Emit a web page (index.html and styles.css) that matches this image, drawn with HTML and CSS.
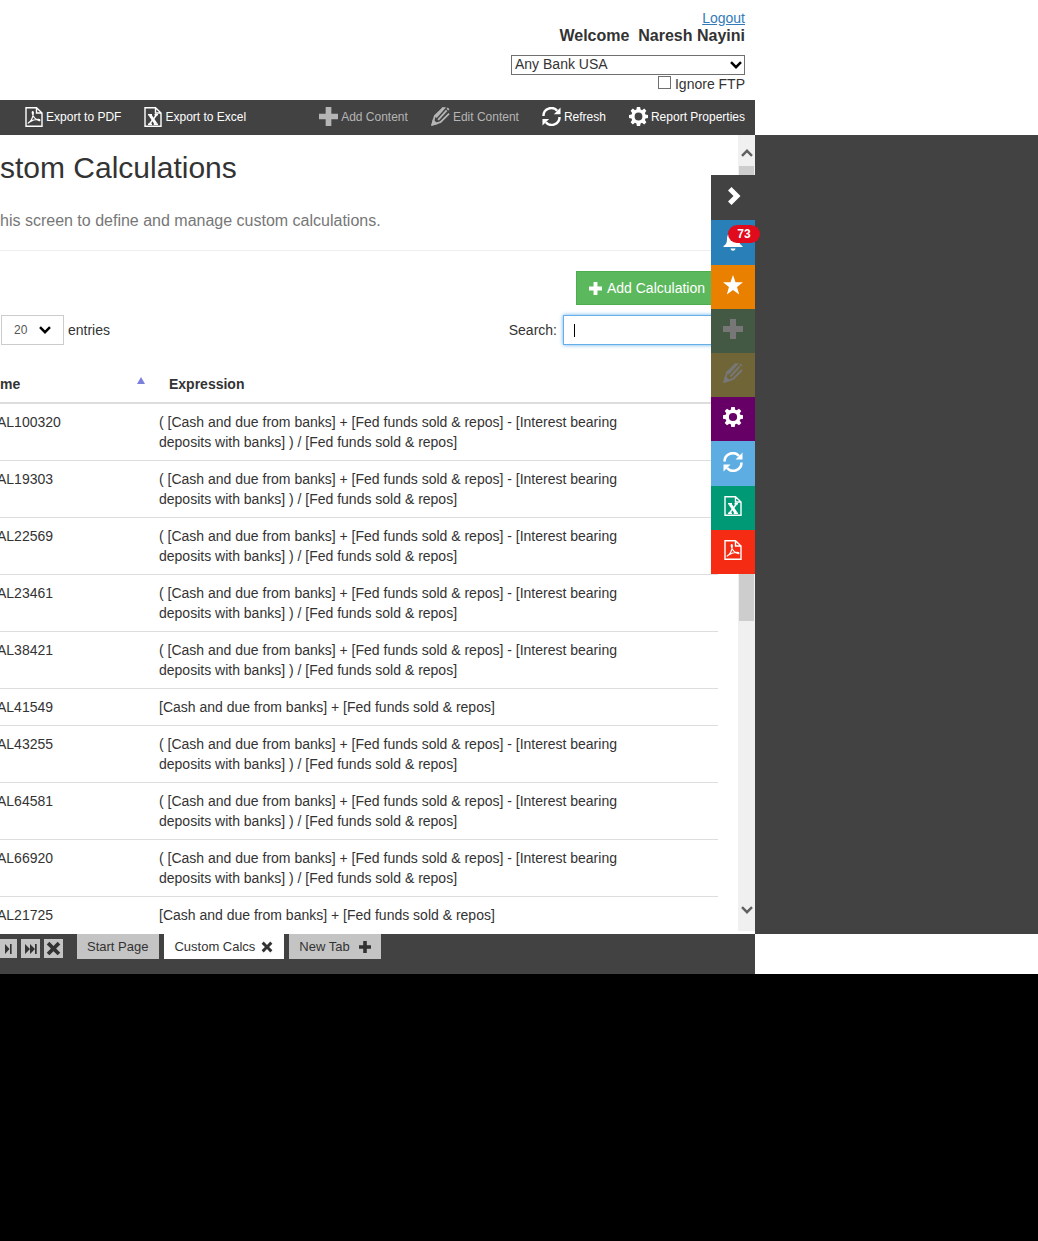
FILE: index.html
```html
<!DOCTYPE html>
<html lang="en">
<head>
<meta charset="utf-8">
<title>Custom Calculations</title>
<link rel="stylesheet" href="styles.css">
</head>
<body>
<svg class="sprite" aria-hidden="true">
  <symbol id="plus" viewBox="0 0 20 20"><path d="M7 0h6v7h7v6h-7v7H7v-7H0V7h7z"/></symbol>
  <symbol id="pencil" viewBox="0 0 20 20"><path fill="none" stroke="currentColor" stroke-width="1.900" stroke-linejoin="round" d="M13 1 4 9.500 1.500 18.500 10 16l9-9M7.500 13.500l9-10M17 1.200 18.800 3"/><path d="m0 20 2-7.500L7.500 18zM12 .300h4L6 11.500 4 10z"/></symbol>
  <symbol id="refresh" viewBox="0 0 20 20"><path fill="none" stroke="currentColor" stroke-width="2.600" d="M1.500 9.500A8.300 8.300 0 0 1 16 4M18.500 10.500A8.300 8.300 0 0 1 4 16"/><path d="M19.500.500V7.500h-7zM.500 19.500v-7h7z"/></symbol>
  <symbol id="gear" viewBox="0 0 20 20"><path fill-rule="evenodd" d="M8.300 0h3.400l.5 2.700 1.500.6L16 1.700 18.300 4l-1.600 2.300.6 1.500 2.700.5v3.400l-2.700.5-.6 1.500 1.600 2.300-2.300 2.300-2.300-1.600-1.500.6-.5 2.700H8.300l-.5-2.700-1.500-.6L4 18.300 1.700 16l1.600-2.300-.6-1.500L0 11.700V8.300l2.700-.5.6-1.500L1.700 4 4 1.700l2.300 1.600 1.500-.6zM10 5.900a4.100 4.100 0 1 0 0 8.200 4.100 4.100 0 0 0 0-8.200z"/></symbol>
  <symbol id="pdf" viewBox="0 0 18 20"><path fill="none" stroke="currentColor" stroke-width="1.400" d="M1 .8h10.500L17 6v13.200H1zM11.500.8V6H17"/><path fill="none" stroke="currentColor" stroke-width="1.300" d="M3.300 16c2.500-1 5-5.500 5-10.500 0-1.200-1.300-1-1 .5.700 4 3 6.500 7 7.500.8.200.7-1-.3-1-3.500-.2-6.500.6-9.500 2.500-1 .7-1.500 1.300-1.200 1z"/></symbol>
  <symbol id="excel" viewBox="0 0 18 20"><path fill="none" stroke="currentColor" stroke-width="1.400" d="M1 .8h10.500L17 6v13.200H1zM11.500.8V6H17"/><path fill="none" stroke="currentColor" stroke-width="3" d="m6 8 6 9"/><path fill="none" stroke="currentColor" stroke-width="1.500" d="m12.500 8-7 9M4 7.700h4M10.500 7.700H14M4 17.200h4M9.800 17.200H14"/></symbol>
  <symbol id="cross" viewBox="0 0 20 20"><path d="M4.500 1 10 6.500 15.500 1 19 4.500 13.500 10l5.500 5.500-3.500 3.500-5.500-5.500L4.500 19 1 15.500 6.500 10 1 4.500z"/></symbol>
  <symbol id="right" viewBox="0 0 20 20"><path d="m8.500 1 9 9-9 9L5 15.500l5.500-5.500L5 4.500z"/></symbol>
  <symbol id="bell" viewBox="0 0 20 20"><path d="M10 0c1 0 1.500.8 1.500 1.700C15 2.500 16 5 16 8c0 4 1 5.500 3.500 7v1H.500v-1C3 13.500 4 12 4 8c0-3 1-5.500 4.500-6.300C8.500.8 9 0 10 0zM7.500 17.500h5c-.5 3-4.500 3-5 0z"/></symbol>
  <symbol id="star" viewBox="0 0 20 20"><path d="m10 0 2.500 7.200H20l-6 4.700 2.200 7.600L10 15l-6.200 4.500L6 11.900 0 7.200h7.500z"/></symbol>
  <symbol id="chevron" viewBox="0 0 12 8"><path fill="none" stroke="currentColor" stroke-width="2.400" d="m1 1.200 5 5 5-5"/></symbol>
  <symbol id="next" viewBox="0 0 12 12"><path d="m3 1 4.500 5L3 11zM8 1h1.600v10H8z"/></symbol>
  <symbol id="last" viewBox="0 0 12 12"><path d="m0 1 5 5-5 5zM5 1l5 5-5 5zM10 1h1.700v10H10z"/></symbol>
</svg>
<div class="screen">
  <div class="app">
    <header class="account">
      <a class="logout" href="#">Logout</a>
      <strong class="welcome">Welcome&nbsp; Naresh Nayini</strong>
      <div class="select bank">
        <select aria-label="Bank"><option>Any Bank USA</option></select>
        <svg><use href="#chevron"/></svg>
      </div>
      <label class="ftp"><input type="checkbox">Ignore FTP</label>
    </header>

    <nav class="toolbar" aria-label="Report actions">
      <div class="group">
        <button><svg class="doc"><use href="#pdf"/></svg>Export to PDF</button>
        <button><svg class="doc"><use href="#excel"/></svg>Export to Excel</button>
      </div>
      <div class="group">
        <button disabled><svg><use href="#plus"/></svg>Add Content</button>
        <button disabled><svg><use href="#pencil"/></svg>Edit Content</button>
        <button><svg><use href="#refresh"/></svg>Refresh</button>
        <button><svg><use href="#gear"/></svg>Report Properties</button>
      </div>
    </nav>

    <div class="view">
      <main class="page">
        <h1>stom Calculations</h1>
        <p class="lead">his screen to define and manage custom calculations.</p>
        <div class="actions"><button class="add"><svg><use href="#plus"/></svg>Add Calculation</button></div>
        <div class="filters">
          <label class="length">
            <span class="select"><select><option>20</option></select><svg><use href="#chevron"/></svg></span>
            entries</label>
          <label class="search">Search: <input type="text"></label>
        </div>
        <table>
          <colgroup><col class="name"><col><col class="tools"></colgroup>
          <thead><tr><th><span class="sorted">me</span></th><th>Expression</th><th></th></tr></thead>
          <tbody>
            <tr><td>AL100320</td><td>( [Cash and due from banks] + [Fed funds sold &amp; repos] - [Interest bearing deposits with banks] ) / [Fed funds sold &amp; repos]</td><td></td></tr>
            <tr><td>AL19303</td><td>( [Cash and due from banks] + [Fed funds sold &amp; repos] - [Interest bearing deposits with banks] ) / [Fed funds sold &amp; repos]</td><td></td></tr>
            <tr><td>AL22569</td><td>( [Cash and due from banks] + [Fed funds sold &amp; repos] - [Interest bearing deposits with banks] ) / [Fed funds sold &amp; repos]</td><td></td></tr>
            <tr><td>AL23461</td><td>( [Cash and due from banks] + [Fed funds sold &amp; repos] - [Interest bearing deposits with banks] ) / [Fed funds sold &amp; repos]</td><td></td></tr>
            <tr><td>AL38421</td><td>( [Cash and due from banks] + [Fed funds sold &amp; repos] - [Interest bearing deposits with banks] ) / [Fed funds sold &amp; repos]</td><td></td></tr>
            <tr><td>AL41549</td><td>[Cash and due from banks] + [Fed funds sold &amp; repos]</td><td></td></tr>
            <tr><td>AL43255</td><td>( [Cash and due from banks] + [Fed funds sold &amp; repos] - [Interest bearing deposits with banks] ) / [Fed funds sold &amp; repos]</td><td></td></tr>
            <tr><td>AL64581</td><td>( [Cash and due from banks] + [Fed funds sold &amp; repos] - [Interest bearing deposits with banks] ) / [Fed funds sold &amp; repos]</td><td></td></tr>
            <tr><td>AL66920</td><td>( [Cash and due from banks] + [Fed funds sold &amp; repos] - [Interest bearing deposits with banks] ) / [Fed funds sold &amp; repos]</td><td></td></tr>
            <tr><td>AL21725</td><td>[Cash and due from banks] + [Fed funds sold &amp; repos]</td><td></td></tr>
          </tbody>
        </table>
      </main>
      <div class="scrollbar">
        <svg class="up"><use href="#chevron"/></svg>
        <div class="thumb"></div>
        <svg><use href="#chevron"/></svg>
      </div>
      <aside class="rail">
        <button class="expand" aria-label="Expand"><svg><use href="#right"/></svg></button>
        <button class="alerts" aria-label="Alerts"><svg><use href="#bell"/></svg><span class="badge">73</span></button>
        <button class="favorite" aria-label="Favorites"><svg><use href="#star"/></svg></button>
        <button class="insert" aria-label="Add content" disabled><svg><use href="#plus"/></svg></button>
        <button class="edit" aria-label="Edit content" disabled><svg><use href="#pencil"/></svg></button>
        <button class="settings" aria-label="Report properties"><svg><use href="#gear"/></svg></button>
        <button class="reload" aria-label="Refresh"><svg><use href="#refresh"/></svg></button>
        <button class="xls" aria-label="Export to Excel"><svg><use href="#excel"/></svg></button>
        <button class="acrobat" aria-label="Export to PDF"><svg><use href="#pdf"/></svg></button>
      </aside>
    </div>

    <footer class="tabbar">
      <div class="pager">
        <button aria-label="Next tab"><svg><use href="#next"/></svg></button>
        <button aria-label="Last tab"><svg><use href="#last"/></svg></button>
        <button aria-label="Close all tabs"><svg class="close"><use href="#cross"/></svg></button>
      </div>
      <div class="tabs">
        <button>Start Page</button>
        <button class="current">Custom Calcs<svg><use href="#cross"/></svg></button>
        <button class="new">New Tab<svg><use href="#plus"/></svg></button>
      </div>
    </footer>
  </div>
  <div class="backdrop"></div>
</div>
</body>
</html>
```
FILE: styles.css
```css
* { box-sizing: border-box; }
body {
  margin: 0;
  background: #000;
  color: #333;
  font: 14px/20px "Liberation Sans", Arial, sans-serif;
}
button, select, input { font: inherit; color: inherit; border-radius: 0; }
button { border: 0; padding: 0; background: none; }
svg { fill: currentColor; flex: none; }
.sprite { display: none; }

.screen {
  display: grid;
  grid-template-columns: minmax(0, 1fr) 283px;
  background: #fff;
}
.backdrop { background: #424242; margin: 135px 0 40px; }

/* account block */
.account {
  display: flex;
  flex-direction: column;
  align-items: flex-end;
  height: 100px;
  padding: 9px 10px 0 0;
}
.logout { color: #337ab7; line-height: 18px; }
.welcome { font-size: 16px; line-height: 18px; }
.select { display: inline-flex; align-items: center; position: relative; }
.select select { appearance: none; width: 100%; background: #fff; }
.select svg { position: absolute; right: 3px; width: 12px; height: 8px; color: #000; pointer-events: none; }
.bank { width: 234px; height: 20px; margin-top: 10px; }
.bank select { height: 20px; border: 1px solid #707070; padding: 0 3px 2px; line-height: 16px; }
.ftp { display: flex; align-items: center; gap: 4px; line-height: 18px; }
.ftp input {
  appearance: none;
  width: 13px;
  height: 13px;
  margin: 0 0 3px;
  border: 1px solid #707070;
}

/* toolbar */
.toolbar {
  display: flex;
  justify-content: flex-end;
  gap: 73px;
  height: 35px;
  padding: 0 10px 2px 0;
  background: #424242;
  color: #fff;
  font-size: 12px;
}
.group { display: flex; gap: 23px; }
.toolbar button { display: flex; align-items: center; gap: 3px; white-space: nowrap; }
.toolbar svg { width: 19px; height: 19px; }
.toolbar .doc { width: 18px; height: 20px; }
.toolbar button:disabled { color: #b5b5b5; }

/* scrolled page */
.view { position: relative; display: flex; }
.page { flex: 1; min-width: 0; padding: 16px 20px 1px 0; }
h1 { margin: 0; font-size: 30px; font-weight: 400; line-height: 34px; }
.lead {
  margin: 0;
  padding: 26px 0 19px;
  border-bottom: 1px solid #eee;
  color: #777;
  font-size: 16px;
}
.actions { display: flex; justify-content: flex-end; padding-top: 20px; }
.add {
  display: flex;
  align-items: center;
  gap: 5px;
  height: 34px;
  padding: 0 12px;
  border: 1px solid #4cae4c;
  background: #5cb85c;
  color: #fff;
}
.add svg { width: 13px; height: 13px; }
.filters { display: flex; justify-content: space-between; padding-top: 10px; }
.filters label { display: flex; align-items: center; height: 30px; gap: 4px; }
.length { padding-left: 1px; }
.length .select { width: 63px; }
.length select { height: 30px; border: 1px solid #ccc; padding: 0 12px; color: #555; font-size: 12px; }
.length svg { right: 13px; }
.search input {
  width: 155px;
  height: 30px;
  margin-left: 2px;
  padding: 0 10px;
  border: 1px solid #66afe9;
  outline: 0;
  background: linear-gradient(#000, #000) no-repeat 10px 8px / 1px 13px;
  box-shadow: 0 0 4px #66afe9;
}

table { width: 100%; margin-top: 19px; border-collapse: separate; border-spacing: 0; table-layout: fixed; }
.name { width: 149px; }
.tools { width: 68px; }
th { padding: 10px 4px 8px 20px; border-bottom: 2px solid #ddd; text-align: left; }
th:first-child { padding-left: 0; }
.sorted { display: flex; justify-content: space-between; }
.sorted::after {
  content: "";
  margin-top: 3px;
  width: 8px;
  height: 7px;
  background: #7b80dc;
  clip-path: polygon(50% 0, 100% 100%, 0 100%);
}
td { padding: 8px 10px; vertical-align: top; border-top: 1px solid #ddd; }
tr:first-child td { border-top: 0; }
td:first-child { padding-left: 0; text-indent: -3px; }

.scrollbar {
  display: flex;
  flex-direction: column;
  align-items: center;
  width: 17px;
  margin-bottom: 3px;
  padding: 14px 0 17px;
  background: #f0f0f0;
  color: #606060;
}
.scrollbar svg { width: 12px; height: 8px; }
.scrollbar .up { transform: rotate(180deg); }
.thumb { width: 15px; height: 455px; margin: 9px 0 auto; background: #cdcdcd; }

/* quick-action rail floating over the page edge */
.rail { position: absolute; top: 40px; right: 0; width: 44px; color: #fff; }
.rail button { display: flex; align-items: center; justify-content: center; position: relative; width: 100%; height: 44px; padding-bottom: 4px; }
.rail svg { width: 20px; height: 20px; }
.rail .expand, .rail .alerts, .rail .reload { height: 45px; }
.rail button:disabled { color: #777; }
.expand { background: #424242; }
.alerts { background: #2980b9; }
.favorite { background: #ea8000; }
.insert { background: #445943; }
.edit { background: #706536; }
.settings { background: #660066; }
.reload { background: #5dade2; }
.xls { background: #009975; }
.acrobat { background: #f52b14; }
.badge {
  position: absolute;
  top: 5px;
  right: -5px;
  width: 32px;
  border-radius: 9px;
  background: #e00b1c;
  font-size: 12px;
  font-weight: 700;
  line-height: 18px;
}

/* tab strip */
.tabbar { display: flex; gap: 14px; height: 40px; background: #424242; font-size: 13px; }
.pager { display: flex; gap: 4px; margin-left: -2px; padding-top: 5px; }
.pager button { display: grid; place-items: center; width: 19px; height: 19px; background: #c4c4c4; }
.pager svg { width: 12px; height: 12px; }
.pager .close { width: 15px; height: 15px; }
.tabs { display: flex; gap: 5px; height: 25px; }
.tabs button { display: flex; align-items: center; gap: 6px; padding: 0 11px 0 10px; background: #c4c4c4; }
.tabs .current { background: #fff; }
.tabs .new { gap: 9px; padding: 0 10px; }
.tabs svg { width: 12px; height: 12px; }
```
